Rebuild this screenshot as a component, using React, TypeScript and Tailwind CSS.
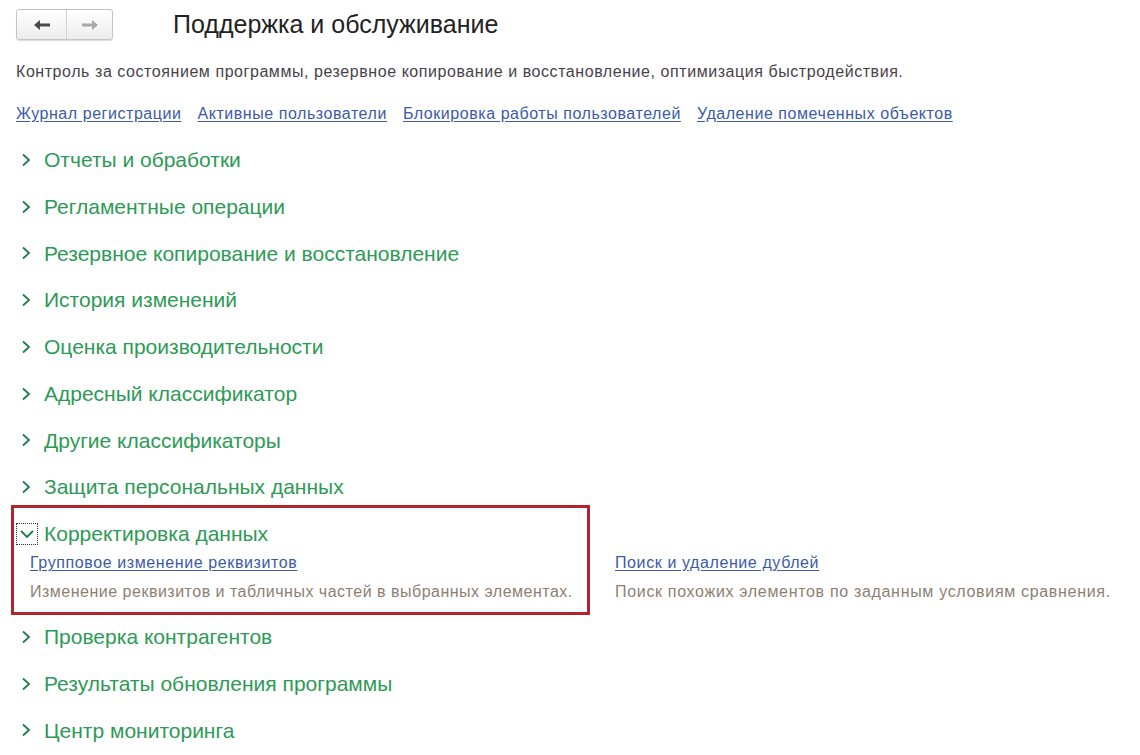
import React from "react";

const Chevron = () => (
  <svg width="12" height="16" viewBox="0 0 12 16" className="shrink-0">
    <polyline points="3,2.5 9,8 3,13.5" fill="none" stroke="#1f7d4b" strokeWidth="1.8" />
  </svg>
);

const rows1 = [
  "Отчеты и обработки",
  "Регламентные операции",
  "Резервное копирование и восстановление",
  "История изменений",
  "Оценка производительности",
  "Адресный классификатор",
  "Другие классификаторы",
  "Защита персональных данных",
];
const rows2 = ["Проверка контрагентов", "Результаты обновления программы", "Центр мониторинга"];

const Row = ({ t }: { t: string }) => (
  <div className="h-[46.75px] flex items-center pl-[20px] gap-[12px]">
    <Chevron />
    <span className="text-[21px] text-[#2d9a55]">{t}</span>
  </div>
);

export default function App() {
  return (
    <div
      className="w-[1140px] h-[755px] bg-white overflow-hidden"
      style={{ fontFamily: '"Liberation Sans", Arial, sans-serif' }}
    >
      <div className="pt-[9px] pl-[16px] flex items-center">
        <div className="flex h-[31px] w-[97px] rounded-[3px] border border-[#c4c4c4] bg-gradient-to-b from-white to-[#ededed] shadow-[0_1px_1px_rgba(0,0,0,0.15)]">
          <div className="w-[50px] flex items-center justify-center border-r border-[#d2d2d2]">
            <svg width="18" height="12" viewBox="0 0 18 12">
              <path d="M1 6 L7 1 L7 4.5 L17 4.5 L17 7.5 L7 7.5 L7 11 Z" fill="#4a4a4a" />
            </svg>
          </div>
          <div className="flex-1 flex items-center justify-center">
            <svg width="18" height="12" viewBox="0 0 18 12">
              <path d="M17 6 L11 1 L11 4.5 L1 4.5 L1 7.5 L11 7.5 L11 11 Z" fill="#a9a9a9" />
            </svg>
          </div>
        </div>
        <div className="ml-[60px] text-[25px] text-[#222] leading-none">Поддержка и обслуживание</div>
      </div>

      <div className="mt-[22px] pl-[16px] text-[16px] tracking-[0.56px] leading-[20px] text-[#4a3f4a]">
        Контроль за состоянием программы, резервное копирование и восстановление, оптимизация быстродействия.
      </div>

      <div className="mt-[22px] pl-[16px] flex gap-[16px] text-[16px] tracking-[0.55px] leading-[20px] text-[#3c5aa8]">
        <span className="underline underline-offset-2">Журнал регистрации</span>
        <span className="underline underline-offset-2">Активные пользователи</span>
        <span className="underline underline-offset-2">Блокировка работы пользователей</span>
        <span className="underline underline-offset-2">Удаление помеченных объектов</span>
      </div>

      <div className="mt-[12.6px] flex flex-col">
        {rows1.map((t) => (
          <Row key={t} t={t} />
        ))}
        <div className="relative h-[103px]">
          <div className="absolute left-[11px] top-[-5.6px] w-[579px] h-[110px] border-[3px] border-[#b3232a] pointer-events-none" />
          <div className="h-[46.75px] flex items-center pl-[16px] gap-[6px]">
            <div className="w-[22px] h-[22px] border border-dotted border-[#333] flex items-center justify-center shrink-0">
              <svg width="16" height="10" viewBox="0 0 16 10">
                <polyline points="2,2 8,8 14,2" fill="none" stroke="#1f7d4b" strokeWidth="1.8" />
              </svg>
            </div>
            <span className="text-[21px] text-[#2d9a55]">Корректировка данных</span>
          </div>
          <div className="flex -mt-[4px] text-[16px] tracking-[0.6px] leading-[20px]">
            <div className="w-[585px] pl-[30px]">
              <div className="text-[#3c5aa8] underline underline-offset-2">Групповое изменение реквизитов</div>
              <div className="mt-[9px] text-[#8c7f74] tracking-[0.5px]">
                Изменение реквизитов и табличных частей в выбранных элементах.
              </div>
            </div>
            <div className="pl-[30px]">
              <div className="text-[#3c5aa8] underline underline-offset-2">Поиск и удаление дублей</div>
              <div className="mt-[9px] text-[#8c7f74] tracking-[0.68px]">Поиск похожих элементов по заданным условиям сравнения.</div>
            </div>
          </div>
        </div>
        {rows2.map((t) => (
          <Row key={t} t={t} />
        ))}
      </div>
    </div>
  );
}
